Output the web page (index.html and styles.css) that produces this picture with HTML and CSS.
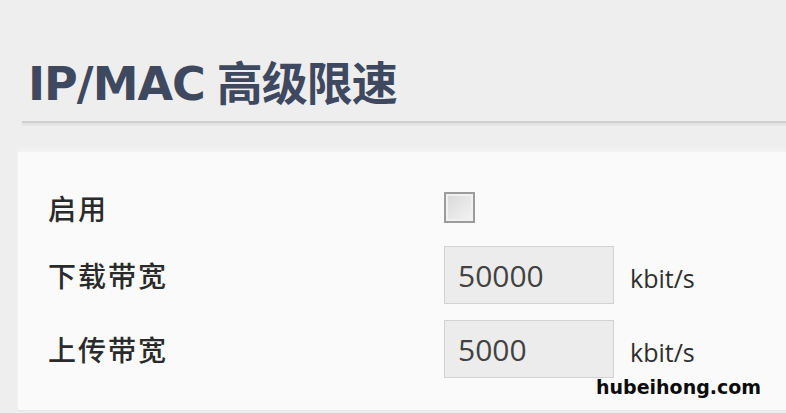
FILE: index.html
```html
<!DOCTYPE html>
<html lang="zh-CN">

<head>
    <meta charset="UTF-8">
    <meta name="viewport" content="width=device-width, initial-scale=1.0">
    <title>IP/MAC 高级限速</title>
    <link rel="stylesheet" href="styles.css">
</head>

<body>

    <div class="page">
        <h1 class="title">IP/MAC 高级限速</h1>
        <div class="rule"></div>

        <div class="panel">
            <div class="form">
                <label class="label" for="enable">启用</label>
                <div class="field">
                    <input type="checkbox" id="enable" class="check">
                </div>

                <label class="label" for="down">下载带宽</label>
                <div class="field">
                    <input type="text" id="down" class="box" value="50000">
                    <span class="unit">kbit/s</span>
                </div>

                <label class="label" for="up">上传带宽</label>
                <div class="field">
                    <input type="text" id="up" class="box" value="5000">
                    <span class="unit">kbit/s</span>
                </div>
            </div>
        </div>

        <div class="mark">hubeihong.com</div>
    </div>

</body>

</html>
```

FILE: styles.css
```css
* {
    padding: 0;
    margin: 0;
    box-sizing: border-box;
}

html,
body {
    width: 786px;
    height: 413px;
    overflow: hidden;
    background: #eeeeee;
    font-family: "Open Sans", "Noto Sans CJK SC", sans-serif;
}

.page {
    position: relative;
    height: 100%;
    display: flex;
    flex-direction: column;
}

/* 标题 */
.title {
    padding: 56px 0 0 28px;
    height: 121px;
    font-family: "DejaVu Sans", "Noto Sans CJK SC", sans-serif;
    font-size: 46px;
    line-height: 56px;
    font-weight: bold;
    color: #3e485e;
    letter-spacing: -1px;
    word-spacing: -3px;
}

.rule {
    margin-left: 22px;
    height: 6px;
    border-top: 2px solid #d0d0d0;
    background: linear-gradient(#dedede, #eeeeee);
}

/* 表单面板 */
.panel {
    flex: 1;
    margin: 25px 0 2px 18px;
    padding-top: 33px;
    background: #fafafa;
    box-shadow: 0 -3px 4px #f4f4f4;
    border-bottom: 1px solid #e6e6e6;
}

.form {
    display: grid;
    grid-template-columns: 396px 1fr;
    grid-template-rows: 45px 58px 58px;
    row-gap: 16px;
    padding-left: 30px;
}

.label {
    display: flex;
    align-items: center;
    font-family: "Noto Sans CJK SC", sans-serif;
    font-size: 28px;
    font-weight: 500;
    color: #2a2a2a;
    letter-spacing: 2px;
}

.field {
    display: flex;
    align-items: center;
}

.check {
    appearance: none;
    width: 31px;
    height: 31px;
    border: 2px solid #9c9c9c;
    background: linear-gradient(135deg, #d8d8d8, #f4f4f4);
    box-shadow: inset 0 0 0 2px #f0f0f0;
}

.box {
    width: 170px;
    height: 58px;
    padding-left: 13px;
    border: 1px solid #d2d2d2;
    background: #ececec;
    font-family: "Open Sans", sans-serif;
    font-size: 30px;
    color: #424242;
    outline: none;
}

.unit {
    margin: 6px 0 0 16px;
    font-size: 25px;
    color: #2e2e2e;
}

/* 水印 */
.mark {
    position: absolute;
    left: 596px;
    top: 376px;
    font-family: "DejaVu Sans", sans-serif;
    font-size: 19px;
    font-weight: bold;
    color: #0c0c0c;
}
```
